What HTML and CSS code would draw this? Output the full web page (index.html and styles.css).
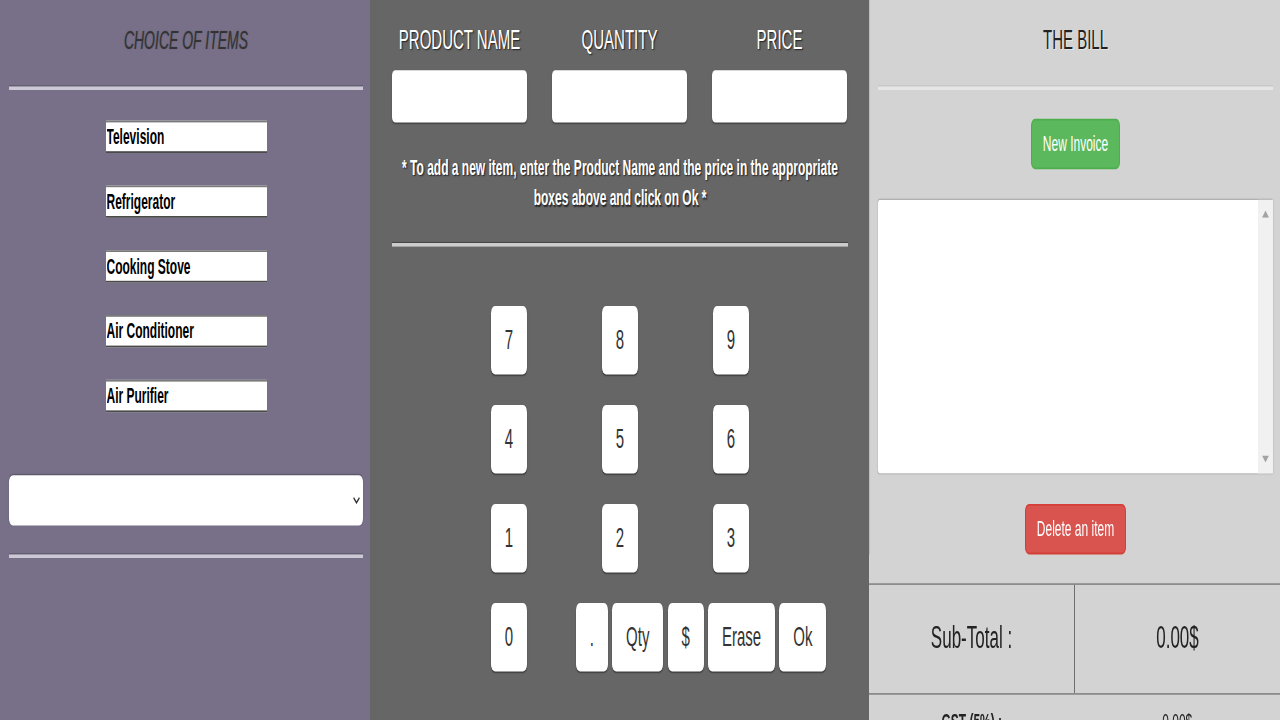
FILE: index.html
```html
<!DOCTYPE html>
<html lang="en">
<head>
<meta charset="utf-8">
<title>Billing</title>
<link rel="stylesheet" href="styles.css">
</head>
<body>
<div class="app">
  <section class="col col-items">
    <h2 class="title title-items">CHOICE OF ITEMS</h2>
    <hr class="rule rule-items">
    <div class="item-list">
      <input class="item" type="text" value="Television" readonly>
      <input class="item" type="text" value="Refrigerator" readonly>
      <input class="item" type="text" value="Cooking Stove" readonly>
      <input class="item" type="text" value="Air Conditioner" readonly>
      <input class="item" type="text" value="Air Purifier" readonly>
    </div>
    <div class="select-wrap">
      <select class="item-select"><option></option></select>
      <svg class="chev" width="7" height="4" viewBox="0 0 7 4"><path d="M0.6 0.5 L3.5 3.3 L6.4 0.5" fill="none" stroke="#333" stroke-width="1.1"/></svg>
    </div>
    <hr class="rule rule-items rule-low">
  </section>

  <section class="col col-entry">
    <div class="entry-grid">
      <h2 class="title title-entry">PRODUCT NAME</h2>
      <h2 class="title title-entry">QUANTITY</h2>
      <h2 class="title title-entry">PRICE</h2>
      <input class="entry-input" type="text">
      <input class="entry-input" type="text">
      <input class="entry-input" type="text">
    </div>
    <p class="note">* To add a new item, enter the Product Name and the price in the appropriate<br>boxes above and click on Ok *</p>
    <hr class="rule rule-entry">
    <div class="keypad">
      <div class="key-row">
        <div class="key-cell"><button class="key">7</button></div>
        <div class="key-cell"><button class="key">8</button></div>
        <div class="key-cell"><button class="key">9</button></div>
      </div>
      <div class="key-row">
        <div class="key-cell"><button class="key">4</button></div>
        <div class="key-cell"><button class="key">5</button></div>
        <div class="key-cell"><button class="key">6</button></div>
      </div>
      <div class="key-row">
        <div class="key-cell"><button class="key">1</button></div>
        <div class="key-cell"><button class="key">2</button></div>
        <div class="key-cell"><button class="key">3</button></div>
      </div>
      <div class="key-row key-row-last">
        <div class="key-cell"><button class="key">0</button></div>
        <div class="key-group">
          <button class="key">.</button>
          <button class="key">Qty</button>
          <button class="key">$</button>
          <button class="key">Erase</button>
          <button class="key">Ok</button>
        </div>
      </div>
    </div>
  </section>

  <section class="col col-bill">
    <div class="bill-top">
      <h2 class="title title-bill">THE BILL</h2>
      <hr class="rule rule-bill">
      <button class="btn btn-green">New Invoice</button>
      <div class="bill-box">
        <textarea class="bill-text"></textarea>
        <div class="scrollbar">
          <svg width="7" height="4" viewBox="0 0 7 4"><path d="M0 4 L3.5 0 L7 4 Z" fill="#a3a3a3"/></svg>
          <svg width="7" height="4" viewBox="0 0 7 4"><path d="M0 0 L3.5 4 L7 0 Z" fill="#a3a3a3"/></svg>
        </div>
      </div>
      <button class="btn btn-red">Delete an item</button>
    </div>
    <div class="totals">
      <div class="tot-row tot-row-main">
        <div class="tot-cell tot-label">Sub-Total :</div>
        <div class="tot-cell">0.00$</div>
      </div>
      <div class="tot-row tot-row-small">
        <div class="tot-cell tot-label">GST (5%) :</div>
        <div class="tot-cell">0.00$</div>
      </div>
    </div>
  </section>
</div>
</body>
</html>
```
FILE: styles.css
```css
html {
  margin: 0;
  padding: 0;
  height: 720px;
  overflow: hidden;
  background: #d3d3d3;
}
body {
  margin: 0;
  padding: 0;
  height: 720px;
  font-family: "Liberation Sans", Arial, sans-serif;
}
button, input, select, textarea {
  font-family: inherit;
}

.app {
  display: flex;
  width: 1280px;
  height: 400px;
  transform: scaleY(1.8);
  transform-origin: 0 0;
}

.col {
  box-sizing: border-box;
  height: 400px;
  flex-shrink: 0;
}
.col-items {
  width: 370px;
  background: #787088;
  padding: 0 7px 0 9px;
}
.col-entry {
  width: 499px;
  background: #666666;
  padding: 0 21px 0 22px;
}
.col-bill {
  width: 411px;
  background: #d3d3d3;
  display: flex;
  flex-direction: column;
}

/* titles */
.title {
  margin: 0;
  padding-top: 12.2px;
  line-height: 20px;
  font-size: 15px;
  font-weight: normal;
  text-align: center;
  white-space: nowrap;
}
.title-items {
  font-size: 14px;
  font-style: italic;
  color: #333;
  text-shadow: 0 0 1px rgba(0, 0, 0, 0.25);
}
.title-entry {
  color: #fff;
  text-shadow: 1px 1px 1px #222;
}
.title-bill {
  color: #222;
  text-shadow: 1px 1px 0 rgba(255, 255, 255, 0.45);
}

/* rules */
.rule {
  margin: 16.1px 0 0;
  border: 0;
  height: 2px;
}
.rule-items {
  background: #cdc8d5;
  box-shadow: 0 -0.6px 0 rgba(0, 0, 0, 0.25);
}
.rule-low {
  margin-top: 16.6px;
}
.rule-entry {
  margin-top: 16.7px;
  background: #cccccc;
  box-shadow: 0 -0.6px 0 rgba(0, 0, 0, 0.3);
}
.rule-bill {
  align-self: stretch;
  background: #e6e6e6;
  box-shadow: 0 -0.6px 0 rgba(0, 0, 0, 0.08);
}

/* left column */
.item-list {
  margin-top: 16.4px;
  display: flex;
  flex-direction: column;
  align-items: center;
  gap: 17.8px;
}
.item {
  box-sizing: border-box;
  width: 161px;
  height: 18.3px;
  margin: 0;
  border: 0;
  border-top: 0.8px solid #7a7a7a;
  border-bottom: 1px solid #4a4a4a;
  padding: 0 0 0 1px;
  background: #fff;
  color: #000;
  font-size: 12px;
  font-weight: bold;
  outline: none;
}
.select-wrap {
  position: relative;
  margin-top: 34.5px;
}
.item-select {
  display: block;
  box-sizing: border-box;
  width: 100%;
  height: 27.8px;
  margin: 0;
  border: 0;
  border-radius: 4px;
  background: #fff;
  appearance: none;
  -webkit-appearance: none;
  box-shadow: 0 -0.6px 1px rgba(0, 0, 0, 0.25);
}
.chev {
  position: absolute;
  right: 3px;
  top: 12px;
}

/* middle column */
.entry-grid {
  display: grid;
  grid-template-columns: repeat(3, 135px);
  column-gap: 25px;
  row-gap: 7.2px;
}
.entry-input {
  box-sizing: border-box;
  width: 135px;
  height: 28.9px;
  margin: 0;
  border: 0;
  border-radius: 3px;
  background: #fff;
  box-shadow: 0 0.6px 1px rgba(0, 0, 0, 0.35);
}
.note {
  margin: 16.6px 0 0;
  font-size: 12px;
  font-weight: bold;
  line-height: 16.7px;
  color: #fff;
  text-align: center;
  text-shadow: 1px 1px 1px #222;
  white-space: nowrap;
}
.keypad {
  width: 333px;
  margin: 33px auto 0;
  display: flex;
  flex-direction: column;
  gap: 17.2px;
}
.key-row {
  display: grid;
  grid-template-columns: repeat(3, 111px);
}
.key-row-last {
  display: flex;
}
.key-cell {
  width: 111px;
  flex-shrink: 0;
  display: flex;
  justify-content: center;
}
.key-group {
  display: flex;
  flex-shrink: 0;
  gap: 4.5px;
  margin-left: 11.5px;
}
.key {
  flex-shrink: 0;
  height: 37.8px;
  margin: 0;
  padding: 0 13.8px;
  border: 0;
  border-radius: 4px;
  background: #fff;
  color: #333;
  font-size: 15px;
  box-shadow: 0 0.6px 1px rgba(0, 0, 0, 0.4);
  white-space: nowrap;
}

/* right column */
.bill-top {
  border-left: 1px solid #bdbdbd;
  padding: 0 7px 0 8px;
  display: flex;
  flex-direction: column;
  align-items: center;
}
.bill-top .title {
  align-self: stretch;
}
.btn {
  height: 28.5px;
  margin: 0;
  padding: 0 10.5px;
  border-radius: 4px;
  color: #fff;
  font-size: 12px;
  white-space: nowrap;
}
.btn-green {
  margin-top: 15.3px;
  background: #5cb85c;
  border: 1px solid #4cae4c;
}
.btn-red {
  margin-top: 16.6px;
  background: #d9534f;
  border: 1px solid #d43f3a;
}
.bill-box {
  align-self: stretch;
  margin-top: 17.2px;
  height: 151.7px;
  display: flex;
  background: #fff;
  border-radius: 2px;
  box-shadow: 0 0 1px rgba(0, 0, 0, 0.35);
}
.bill-text {
  flex: 1;
  margin: 0;
  border: 0;
  padding: 2px;
  resize: none;
  background: transparent;
  outline: none;
}
.scrollbar {
  width: 15px;
  background: #f1f1f1;
  display: flex;
  flex-direction: column;
  align-items: center;
  justify-content: space-between;
  padding: 5.8px 0;
  box-sizing: border-box;
}

.totals {
  flex: 1;
  margin-top: 16.1px;
  border-top: 1.2px solid #8c8c8c;
}
.tot-row {
  display: flex;
}
.tot-row-main {
  height: 59.4px;
  border-bottom: 1.2px solid #8c8c8c;
}
.tot-cell {
  flex: 1;
  display: flex;
  align-items: center;
  justify-content: center;
  font-size: 17px;
  color: #222;
}
.tot-row-main .tot-label {
  border-right: 1px solid #6f6f6f;
}
.tot-row-small {
  padding-top: 8.8px;
}
.tot-row-small .tot-cell {
  font-size: 12px;
  line-height: 14px;
  font-weight: normal;
}
.tot-row-small .tot-label {
  font-weight: bold;
}
```
